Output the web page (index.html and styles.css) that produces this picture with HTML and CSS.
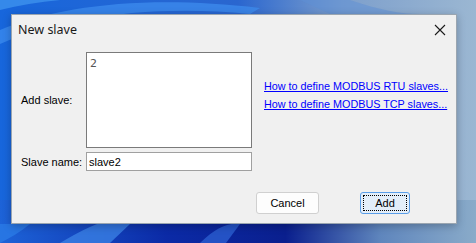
FILE: index.html
```html
<!DOCTYPE html>
<html lang="en">
<head>
  <meta charset="UTF-8" />
  <title>New slave</title>
  <link rel="stylesheet" href="styles.css">
</head>
<body>
  <div id="desktop">
    <svg id="wallpaper" width="476" height="243" viewBox="0 0 476 243" aria-hidden="true">
      <defs>
        <linearGradient id="sky" x1="0" y1="0" x2="1" y2="0">
          <stop offset="0" stop-color="#1766dc"/>
          <stop offset="0.5" stop-color="#2a66cf"/>
          <stop offset="0.72" stop-color="#7d9fcc"/>
          <stop offset="1" stop-color="#9bb7d2"/>
        </linearGradient>
        <linearGradient id="deep" x1="0" y1="0" x2="1" y2="0">
          <stop offset="0" stop-color="#1d63d8"/>
          <stop offset="0.35" stop-color="#0b2aa6"/>
          <stop offset="0.6" stop-color="#0a1f8e"/>
          <stop offset="0.8" stop-color="#5f86bd"/>
          <stop offset="1" stop-color="#8aabc9"/>
        </linearGradient>
      </defs>
      <rect width="476" height="243" fill="url(#sky)"/>
      <rect y="200" width="476" height="43" fill="url(#deep)"/>
      <path d="M0 30 C60 5 150 -5 260 8 L250 14 C150 4 60 18 0 44 Z" fill="#3e8ff0" opacity="0.7"/>
      <path d="M0 10 C50 -2 110 -6 180 0 L0 0 Z" fill="#4aa0f4" opacity="0.6"/>
      <path d="M300 0 L350 0 C380 10 400 14 420 14 L330 14 Z" fill="#5e8fd6" opacity="0.5"/>
      <path d="M60 243 C90 225 110 215 130 224 L110 243 Z" fill="#3a7fe4" opacity="0.8"/>
      <path d="M200 243 C215 228 228 222 240 224 L226 243 Z" fill="#2a5ed0" opacity="0.8"/>
      <path d="M0 224 L30 224 C20 232 10 238 0 243 Z" fill="#2a7ae6" opacity="0.8"/>
    </svg>

    <div class="window">
      <div class="titlebar">
        <span class="title">New slave</span>
        <svg class="close" width="12" height="12" viewBox="0 0 12 12" aria-hidden="true">
          <path d="M1 1 L11 11 M11 1 L1 11" stroke="#1a1a1a" stroke-width="1.1"/>
        </svg>
      </div>

      <div class="content">
        <div class="form">
          <label class="lbl" for="slaves">Add slave:</label>
          <textarea id="slaves" class="field area">2</textarea>
          <div class="links">
            <a href="#">How to define MODBUS RTU slaves...</a>
            <a href="#">How to define MODBUS TCP slaves...</a>
          </div>
          <label class="lbl" for="slave-name">Slave name:</label>
          <input id="slave-name" class="field line" type="text" value="slave2" />
        </div>

        <div class="buttons">
          <button class="btn">Cancel</button>
          <button class="btn default"><span class="focus">Add</span></button>
        </div>
      </div>
    </div>
  </div>
</body>
</html>
```

FILE: styles.css
```css
html, body {
  margin: 0;
  padding: 0;
  overflow: hidden;
}
#desktop {
  position: relative;
  width: 476px;
  height: 243px;
  padding: 14px 0 0 11px;
  box-sizing: border-box;
  font-family: "Liberation Sans", Arial, sans-serif;
}
#wallpaper {
  position: absolute;
  left: 0;
  top: 0;
}
.window {
  position: relative;
  width: 446px;
  height: 210px;
  box-sizing: border-box;
  background: #f0f0f0;
  border: 1px solid #9aa5b0;
  box-shadow: 0 2px 8px rgba(0,0,0,0.25);
}
.titlebar {
  display: flex;
  align-items: center;
  justify-content: space-between;
  height: 29px;
  padding: 0 10px 0 6px;
}
.title {
  font-family: "Noto Sans", "Open Sans", sans-serif;
  font-size: 12.5px;
  color: #1a1a1a;
}
.close {
  display: block;
}
.content {
  padding: 8px 0 0 9px;
}
.form {
  display: grid;
  grid-template-columns: 65px 166px auto;
  grid-template-rows: 96px 19px;
  row-gap: 4px;
  align-items: center;
}
.lbl {
  font-size: 11px;
  color: #000;
  white-space: nowrap;
}
.field {
  box-sizing: border-box;
  width: 166px;
  margin: 0;
  border: 1px solid #7a7a7a;
  background: #fff;
  font-family: "DejaVu Sans", sans-serif;
  font-size: 11px;
  color: #000;
  outline: none;
}
.area {
  height: 96px;
  resize: none;
  padding: 4px 3px;
  color: #555;
}
.line {
  height: 19px;
  padding: 0 2px;
  border-color: #a0a0a0;
  font-family: "Liberation Sans", Arial, sans-serif;
}
.links {
  grid-row: 1;
  grid-column: 3;
  align-self: start;
  display: flex;
  flex-direction: column;
  gap: 6px;
  padding: 28px 0 0 12px;
}
.links a {
  font-size: 10.8px;
  color: #0000ff;
  white-space: nowrap;
}
.buttons {
  display: flex;
  gap: 41px;
  margin: 21px 0 0 235px;
}
.btn {
  box-sizing: border-box;
  height: 22px;
  width: 63px;
  margin: 0;
  padding: 0;
  border: 1px solid #d0d0d0;
  border-radius: 3px;
  background: #fdfdfd;
  font-family: "Liberation Sans", Arial, sans-serif;
  font-size: 11px;
  color: #000;
}
.btn.default {
  width: 50px;
  border-color: #5a9ee8;
  background: #e3eef9;
  padding: 2px;
}
.focus {
  display: flex;
  align-items: center;
  justify-content: center;
  height: 100%;
  border: 1px dotted #000;
  box-sizing: border-box;
}
```
